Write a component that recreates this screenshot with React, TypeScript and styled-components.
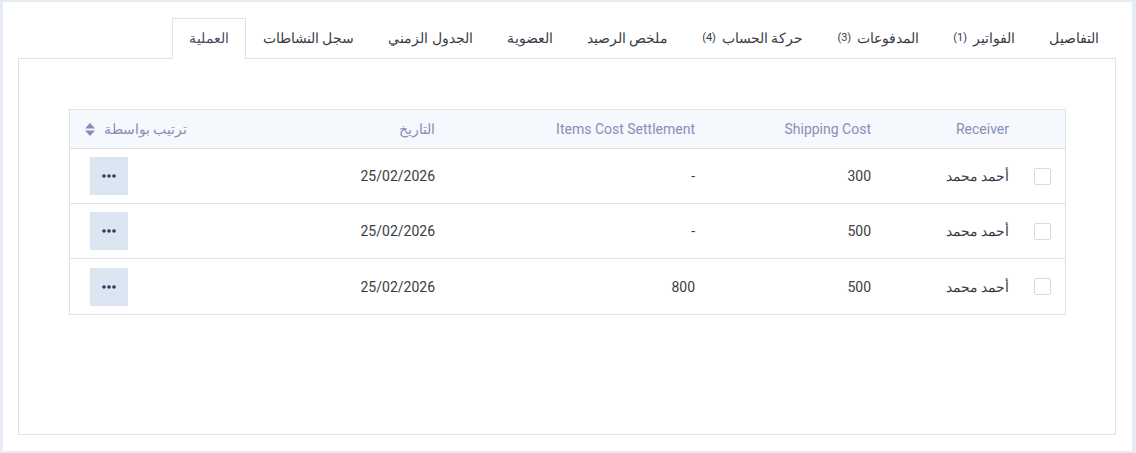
import React from 'react';
import styled, { createGlobalStyle } from 'styled-components';

const GlobalStyle = createGlobalStyle`
  html, body {
    margin: 0;
    padding: 0;
    background: #e5ecf5;
  }
  body {
    font-family: Roboto, sans-serif;
    font-size: 14px;
    color: #3a3b45;
  }
  * {
    box-sizing: border-box;
  }
`;

const Page = styled.div`
  padding: 2px 4px 2px 3px;
  height: 453px;
`;

const Card = styled.div`
  direction: rtl;
  background: #ffffff;
  height: 449px;
  padding: 15px 16px 16px 15px;
  display: flex;
  flex-direction: column;
`;

const TabBar = styled.div`
  display: flex;
  align-items: flex-end;
  height: 41px;
`;

const Tab = styled.div<{ $active?: boolean }>`
  height: 41px;
  padding: 0 16px 3px;
  display: flex;
  align-items: center;
  gap: 6px;
  white-space: nowrap;
  color: ${({ $active }) => ($active ? '#4b4c5a' : '#3a3b45')};
  background: ${({ $active }) => ($active ? '#ffffff' : 'transparent')};
  border: 1px solid ${({ $active }) => ($active ? '#dde3e8' : 'transparent')};
  border-bottom: none;
  margin-bottom: -1px;
  position: relative;
  z-index: 1;
  cursor: pointer;
`;

const Count = styled.span`
  font-size: 11px;
  color: #3a3b45;
`;

const Panel = styled.div`
  flex: 1;
  border: 1px solid #dde3e8;
  padding: 50px 49px 0 50px;
`;

const Table = styled.div`
  border: 1px solid #dfe3e8;
  display: grid;
  grid-template-columns: 42px 138px 176px 260px 248px 1fr;
`;

const HeadCell = styled.div`
  height: 39px;
  background: #f5f8fc;
  border-bottom: 1px solid #dfe3e8;
  display: flex;
  align-items: center;
  gap: 9px;
  padding: 0 14px;
  color: #878fb8;
  white-space: nowrap;
`;

const Cell = styled.div<{ $last?: boolean; $action?: boolean }>`
  height: 55px;
  border-bottom: ${({ $last }) => ($last ? 'none' : '1px solid #dfe3e8')};
  display: flex;
  align-items: center;
  justify-content: ${({ $action }) => ($action ? 'flex-end' : 'flex-start')};
  padding: ${({ $action }) => ($action ? '0 20px' : '0 14px')};
  color: #3a3b45;
  white-space: nowrap;
`;

const CheckCell = styled(Cell)`
  padding: 0 14px 0 0;
`;

const Checkbox = styled.span`
  flex-shrink: 0;
  width: 17px;
  height: 17px;
  border: 1px solid #d6dbe1;
  border-radius: 2px;
  background: #fff;
`;

const MoreButton = styled.button`
  width: 38px;
  height: 38px;
  border: none;
  border-radius: 0;
  background: #dbe6f2;
  display: flex;
  align-items: center;
  justify-content: center;
  padding: 0;
  cursor: pointer;
`;

const tabs = [
  { label: 'التفاصيل' },
  { label: 'الفواتير', count: 1 },
  { label: 'المدفوعات', count: 3 },
  { label: 'حركة الحساب', count: 4 },
  { label: 'ملخص الرصيد' },
  { label: 'العضوية' },
  { label: 'الجدول الزمني' },
  { label: 'سجل النشاطات' },
  { label: 'العملية', active: true },
];

const rows = [
  { receiver: 'أحمد محمد', shipping: '300', items: '-', date: '25/02/2026' },
  { receiver: 'أحمد محمد', shipping: '500', items: '-', date: '25/02/2026' },
  { receiver: 'أحمد محمد', shipping: '500', items: '800', date: '25/02/2026' },
];

const SortIcon = () => (
  <svg width="10" height="13" viewBox="0 0 10 13">
    <path d="M5 0 L10 5.5 H0 Z" fill="#878fb8" />
    <path d="M0 7.5 H10 L5 13 Z" fill="#878fb8" />
  </svg>
);

const Dots = () => (
  <svg width="14" height="4" viewBox="0 0 14 4">
    <circle cx="2" cy="2" r="1.8" fill="#273a63" />
    <circle cx="7" cy="2" r="1.8" fill="#273a63" />
    <circle cx="12" cy="2" r="1.8" fill="#273a63" />
  </svg>
);

export default function App() {
  return (
    <Page>
      <GlobalStyle />
      <Card>
        <TabBar>
          {tabs.map((t) => (
            <Tab key={t.label} $active={t.active}>
              <span>{t.label}</span>
              {t.count !== undefined && <Count>({t.count})</Count>}
            </Tab>
          ))}
        </TabBar>
        <Panel>
          <Table>
            <HeadCell />
            <HeadCell>Receiver</HeadCell>
            <HeadCell>Shipping Cost</HeadCell>
            <HeadCell>Items Cost Settlement</HeadCell>
            <HeadCell>التاريخ</HeadCell>
            <HeadCell>
              <span>ترتيب بواسطة</span>
              <SortIcon />
            </HeadCell>
            {rows.map((r, i) => {
              const last = i === rows.length - 1;
              return (
                <React.Fragment key={i}>
                  <CheckCell $last={last}>
                    <Checkbox />
                  </CheckCell>
                  <Cell $last={last}>{r.receiver}</Cell>
                  <Cell $last={last}>{r.shipping}</Cell>
                  <Cell $last={last}>{r.items}</Cell>
                  <Cell $last={last}>{r.date}</Cell>
                  <Cell $last={last} $action>
                    <MoreButton aria-label="more">
                      <Dots />
                    </MoreButton>
                  </Cell>
                </React.Fragment>
              );
            })}
          </Table>
        </Panel>
      </Card>
    </Page>
  );
}
